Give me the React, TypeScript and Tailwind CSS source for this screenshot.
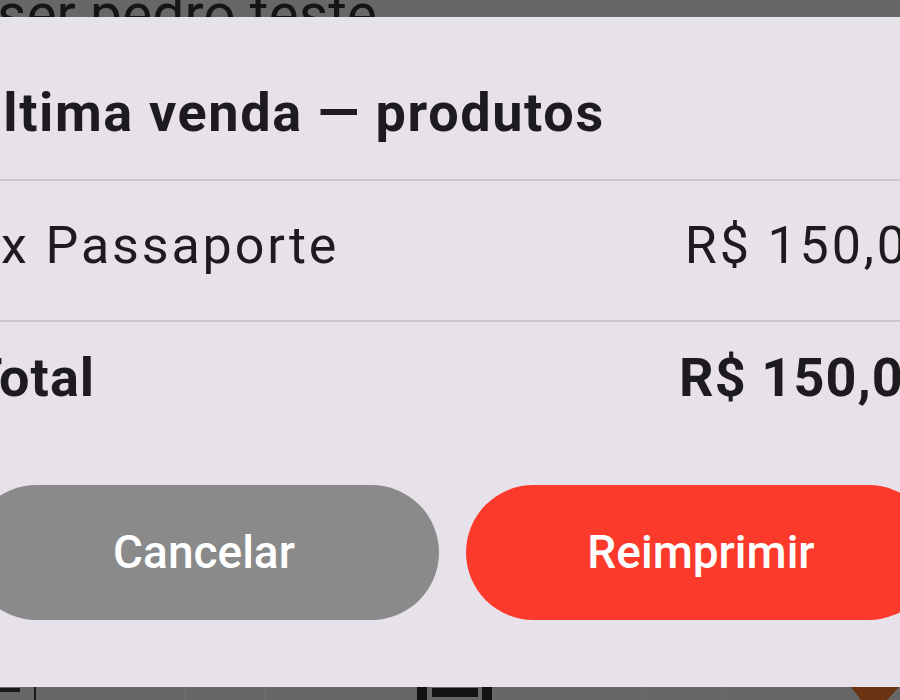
import React from "react";

export default function App() {
  return (
    <div className="relative w-[900px] h-[700px] overflow-hidden bg-[#676767] font-['Roboto',sans-serif] flex flex-col justify-between">
      {/* background page (behind scrim) */}
      <div className="mt-[-13px] ml-[-40px] text-[57px] leading-[56px] text-[#151515] whitespace-nowrap">
        User pedro teste
      </div>
      <div className="h-[13px] flex items-stretch">
        <div className="w-[20px] h-[4px] mt-[1px] bg-[#1a1a1a]" />
        <div className="ml-[14px] w-[2px] bg-[#1a1a1a]" />
        <div className="ml-[148px] w-[1px] bg-[#6d6d6d]" />
        <div className="ml-[79px] w-[1px] bg-[#6d6d6d]" />
        <div className="ml-[152px] w-[10px] bg-[#121212]" />
        <div className="ml-[5px] w-[46px] h-[9px] mt-[1px] bg-[#121212]" />
        <div className="ml-[4px] w-[10px] bg-[#121212]" />
        <div className="ml-[153px] w-[1px] bg-[#6d6d6d]" />
        <div className="ml-[79px] w-[1px] bg-[#6d6d6d]" />
        <div className="ml-[125px] w-[48px]">
          <svg width="48" height="13" viewBox="0 0 48 13">
            <path d="M0 0 H48 L36 13 H10 Z" fill="#6a3413" />
          </svg>
        </div>
      </div>

      {/* dialog */}
      <div className="absolute left-[-55px] top-[17px] w-[1015px] h-[670px] bg-[#e7e1e9] px-[24px] pt-[65px] flex flex-col text-[#1d1b20]">
        <div className="absolute left-0 right-0 top-0 h-[5px] bg-[#e4e3e6]" />
        <div className="-ml-[3px] text-[54px] leading-[61px] font-bold tracking-[0.03em] whitespace-nowrap">
          Última venda — produtos
        </div>
        <div className="mt-[36px] h-[2px] bg-[#ccc6ce]" />
        <div className="mt-[34px] flex justify-between text-[52px] leading-[61px] tracking-[0.055em] whitespace-nowrap">
          <span>1x Passaporte</span>
          <span className="-mr-[5px]">R$ 150,00</span>
        </div>
        <div className="mt-[44px] h-[2px] bg-[#ccc6ce]" />
        <div className="mt-[25px] flex justify-between text-[54px] leading-[61px] font-bold tracking-[0.02em] whitespace-nowrap">
          <span>Total</span>
          <span>R$ 150,00</span>
        </div>
        <div className="mt-[77px] flex gap-[27px]">
          <button className="flex-1 h-[135px] rounded-full bg-[#8a8a8a] text-white text-[46px] font-medium">
            Cancelar
          </button>
          <button className="flex-1 h-[135px] rounded-full bg-[#fc3a2c] text-white text-[46px] font-medium">
            Reimprimir
          </button>
        </div>
      </div>
    </div>
  );
}
